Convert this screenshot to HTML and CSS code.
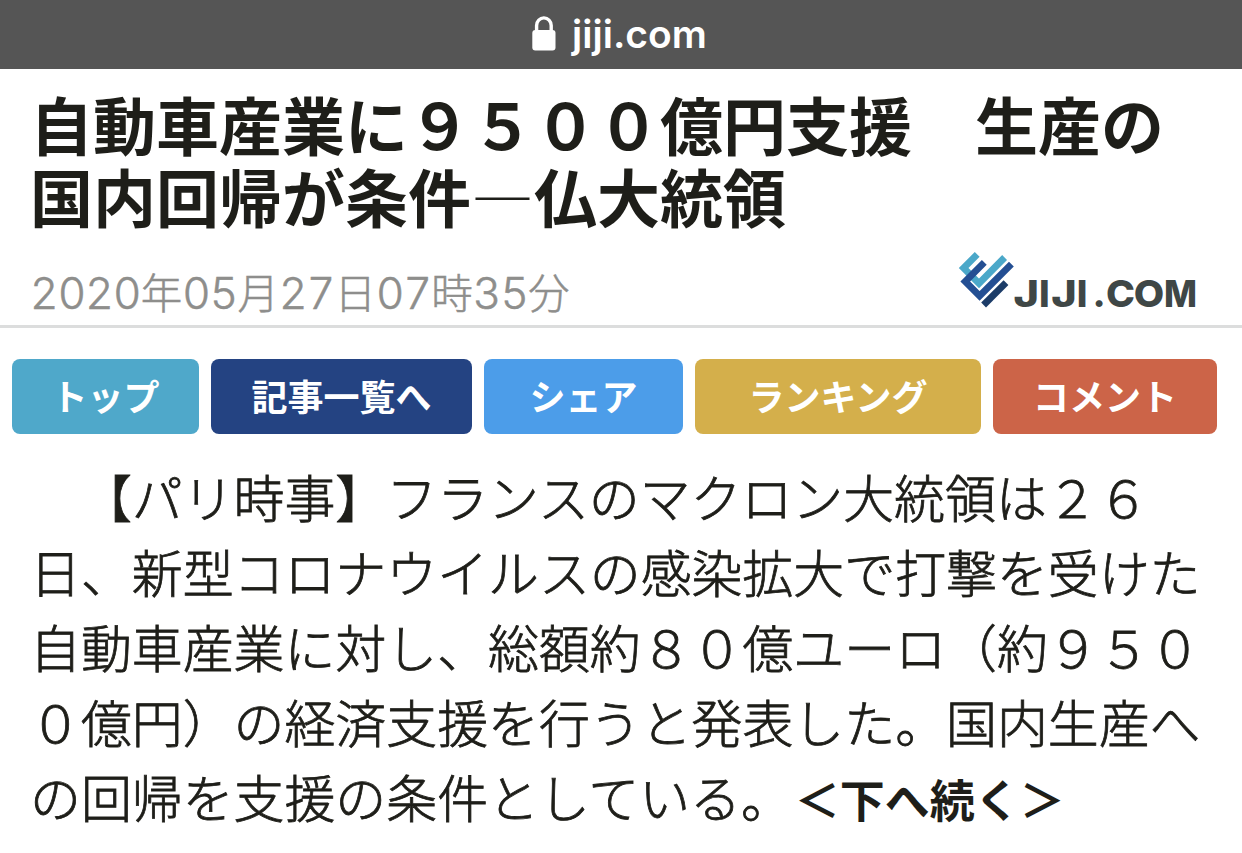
FILE: index.html
```html
<!DOCTYPE html>
<html lang="ja">
<head>
  <meta charset="UTF-8">
  <meta name="viewport" content="width=device-width, initial-scale=1.0">
  <title>自動車産業に９５００億円支援：時事ドットコム</title>
  <link rel="stylesheet" href="styles.css">
</head>
<body>
  <div class="address-bar">
    <svg class="lock" width="24" height="35" viewBox="0 0 24 35">
      <path d="M4.6 16V9.5a7.3 7.6 0 0 1 14.6 0V16" fill="none" stroke="#fff" stroke-width="3.4"/>
      <rect x="0.3" y="14" width="23.2" height="20.4" rx="3" fill="#fff"/>
    </svg>
    <span class="host">jiji.com</span>
  </div>

  <header class="article-header">
    <h1>自動車産業に９５００億円支援　生産の<br>国内回帰が条件<span class="dash">―</span>仏大統領</h1>
    <div class="meta">
      <time datetime="2020-05-27T07:35"><span class="num">2020</span>年<span class="num">05</span>月<span class="num">27</span>日<span class="num">07</span>時<span class="num">35</span>分</time>
      <svg class="logo" width="260" height="80" viewBox="0 0 260 80">
        <g fill="none" stroke-width="6.8">
          <path stroke="#4ba8c9" d="M37.2 14.4L23.6 28L39 43.5L64.6 17.5"/>
          <path stroke="#244f93" d="M44.3 22.3L25.2 41.5L39.6 56L71.4 24.2"/>
          <path stroke="#1c3c68" d="M66 42.6L43.6 65"/>
        </g>
        <g class="logo-text">
          <text x="73.5" y="67.3" textLength="25.5" lengthAdjust="spacingAndGlyphs">J</text>
          <text x="99" y="67.3">I</text>
          <text x="111.2" y="67.3" textLength="25.5" lengthAdjust="spacingAndGlyphs">J</text>
          <text x="136.8" y="67.3">I</text>
          <text x="152.5" y="67.3">.</text>
          <text x="166" y="67.3" textLength="29" lengthAdjust="spacingAndGlyphs">C</text>
          <text x="193.7" y="67.3" textLength="30.5" lengthAdjust="spacingAndGlyphs">O</text>
          <text x="224" y="67.3" textLength="33" lengthAdjust="spacingAndGlyphs">M</text>
        </g>
      </svg>
    </div>
  </header>

  <nav class="buttons">
    <a class="btn top">トップ</a>
    <a class="btn list">記事一覧へ</a>
    <a class="btn share">シェア</a>
    <a class="btn ranking">ランキング</a>
    <a class="btn comment">コメント</a>
  </nav>

  <p class="article-body">　【パリ時事】フランスのマクロン大統領は２６<br>日、新型コロナウイルスの感染拡大で打撃を受けた<br>自動車産業に対し、総額約８０億ユーロ（約９５０<br>０億円）の経済支援を行うと発表した。国内生産へ<br>の回帰を支援の条件としている。<b>＜下へ続く＞</b></p>
</body>
</html>
```
FILE: styles.css
```css
* {
  margin: 0;
  padding: 0;
  box-sizing: border-box;
}
body {
  font-family: "Noto Sans CJK JP", sans-serif;
  background: #fff;
  color: #1e1e19;
  text-spacing-trim: space-all;
  overflow: hidden;
}
.address-bar {
  height: 69px;
  background: #555;
  color: #fff;
  display: flex;
  justify-content: center;
  align-items: center;
  gap: 16px;
  padding: 0 3px 3px 0;
}
.host {
  font-family: Inter, sans-serif;
  font-size: 39px;
  font-weight: 600;
  line-height: 1;
}
.article-header {
  height: 259px;
  padding: 18px 30px 0;
  border-bottom: 3px solid #dcdddd;
}
h1 {
  font-size: 63px;
  font-weight: 700;
  line-height: 72px;
  white-space: nowrap;
}
.dash {
  font-weight: 300;
}
.meta {
  display: flex;
  justify-content: space-between;
  height: 94px;
}
time {
  padding-top: 32px;
  font-size: 41.5px;
  font-weight: 300;
  line-height: 56px;
  color: #8e8e8c;
  white-space: nowrap;
  -webkit-text-stroke: 0.5px #8e8e8c;
}
.num {
  font-family: Inter, sans-serif;
  font-size: 44px;
  font-weight: 300;
  font-variant-numeric: tabular-nums;
  letter-spacing: -0.8px;
  line-height: 1;
}
.logo {
  flex: none;
  margin: 9px 12px 0 0;
}
.logo-text {
  font-family: Inter, sans-serif;
  font-size: 37.5px;
  font-weight: 800;
  fill: #3f4746;
}
.buttons {
  display: flex;
  gap: 12px;
  padding: 31px 12px 0;
}
.btn {
  height: 75px;
  border-radius: 8px;
  color: #fff;
  font-size: 36px;
  font-weight: 700;
  line-height: 72px;
  text-align: center;
  white-space: nowrap;
}
.top {
  width: 187px;
  background: #4fa8ca;
}
.list {
  width: 261px;
  background: #244382;
}
.share {
  width: 199px;
  background: #4c9de9;
}
.ranking {
  width: 286px;
  background: #d4af4b;
}
.comment {
  width: 224px;
  background: #cc6448;
}
.article-body {
  padding: 25px 30px 0;
  font-size: 50.9px;
  font-weight: 300;
  line-height: 75px;
  white-space: nowrap;
  -webkit-text-stroke: 0.8px #1e1e19;
}
.article-body b {
  margin-left: 3px;
  font-size: 45px;
  font-weight: 700;
  line-height: 1;
  -webkit-text-stroke: 0;
}
```
